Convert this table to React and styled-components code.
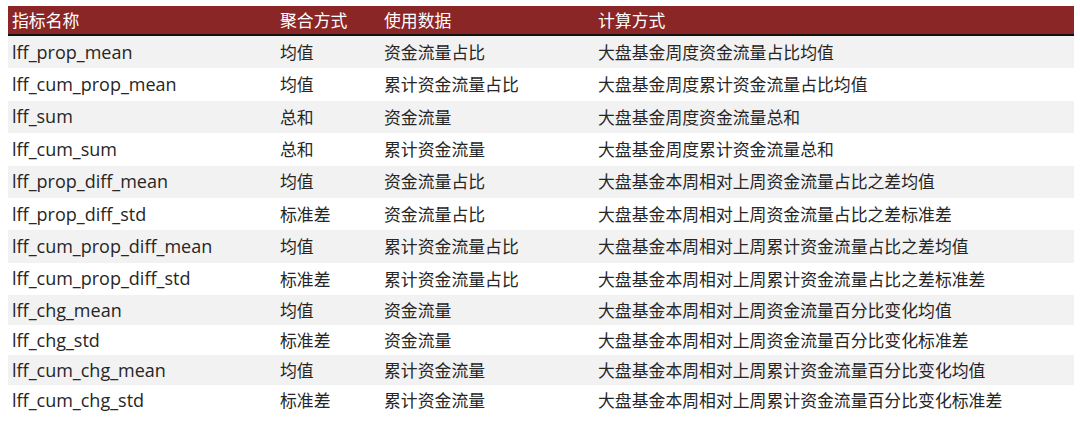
import React from 'react';
import styled, { createGlobalStyle } from 'styled-components';

const GlobalStyle = createGlobalStyle`
  html, body {
    margin: 0;
    padding: 0;
    background: #ffffff;
  }
`;

const Page = styled.div`
  padding: 6px 6px 0 8px;
  width: 1066px;
  font-family: "Noto Sans CJK SC", "Noto Sans", sans-serif;
  color: #262626;
`;

const Grid = styled.div`
  display: grid;
  grid-template-columns: 268px 104px 214px 1fr;
`;

const HeaderRow = styled(Grid)`
  height: 28px;
  background: #8b2627;
  color: #ffffff;
  border-bottom: 2px solid #111111;
`;

const Row = styled(Grid)`
  height: ${props => (props.$compact ? '30px' : '32.4px')};
  background: ${props => (props.$striped ? '#f2f2f2' : '#ffffff')};
`;

const Cell = styled.div`
  display: flex;
  align-items: center;
  padding-left: 4px;
  font-size: 16.85px;
  line-height: 1;
  white-space: nowrap;
`;

const CodeCell = styled(Cell)`
  font-family: "Open Sans", "Noto Sans CJK SC", sans-serif;
  font-size: 18px;
  padding-bottom: 1px;
`;

const columns = ['指标名称', '聚合方式', '使用数据', '计算方式'];

const rows = [
  ['lff_prop_mean', '均值', '资金流量占比', '大盘基金周度资金流量占比均值'],
  ['lff_cum_prop_mean', '均值', '累计资金流量占比', '大盘基金周度累计资金流量占比均值'],
  ['lff_sum', '总和', '资金流量', '大盘基金周度资金流量总和'],
  ['lff_cum_sum', '总和', '累计资金流量', '大盘基金周度累计资金流量总和'],
  ['lff_prop_diff_mean', '均值', '资金流量占比', '大盘基金本周相对上周资金流量占比之差均值'],
  ['lff_prop_diff_std', '标准差', '资金流量占比', '大盘基金本周相对上周资金流量占比之差标准差'],
  ['lff_cum_prop_diff_mean', '均值', '累计资金流量占比', '大盘基金本周相对上周累计资金流量占比之差均值'],
  ['lff_cum_prop_diff_std', '标准差', '累计资金流量占比', '大盘基金本周相对上周累计资金流量占比之差标准差'],
  ['lff_chg_mean', '均值', '资金流量', '大盘基金本周相对上周资金流量百分比变化均值'],
  ['lff_chg_std', '标准差', '资金流量', '大盘基金本周相对上周资金流量百分比变化标准差'],
  ['lff_cum_chg_mean', '均值', '累计资金流量', '大盘基金本周相对上周累计资金流量百分比变化均值'],
  ['lff_cum_chg_std', '标准差', '累计资金流量', '大盘基金本周相对上周累计资金流量百分比变化标准差'],
];

export default function App() {
  return (
    <>
      <GlobalStyle />
      <Page>
        <HeaderRow>
          {columns.map(c => (
            <Cell key={c}>{c}</Cell>
          ))}
        </HeaderRow>
        {rows.map((r, i) => (
          <Row key={r[0]} $striped={i % 2 === 0} $compact={i >= 8}>
            <CodeCell>{r[0]}</CodeCell>
            <Cell>{r[1]}</Cell>
            <Cell>{r[2]}</Cell>
            <Cell>{r[3]}</Cell>
          </Row>
        ))}
      </Page>
    </>
  );
}
